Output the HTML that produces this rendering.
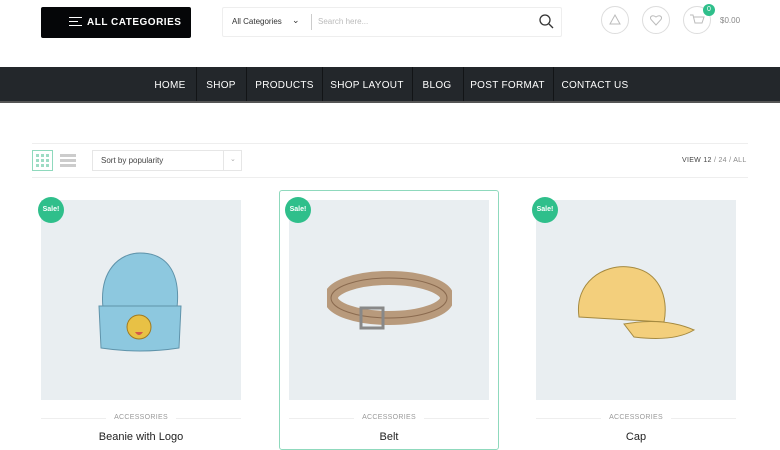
<!DOCTYPE html>
<html><head><meta charset="utf-8"><style>
*{margin:0;padding:0;box-sizing:border-box}
body{width:780px;height:440px;overflow:hidden;background:#fff;font-family:"Liberation Sans",sans-serif;position:relative}
.a{position:absolute}
.nav{left:0;top:67px;width:780px;height:36px;background:#23272b;border-bottom:2px solid #555}
.nav span{position:absolute;top:2px;height:34px;line-height:34px;color:#fff;font-size:10px;letter-spacing:.3px;text-align:center}
.sep{position:absolute;top:0;width:1px;height:34px;background:#121416}
.img{background:#e9eef1;width:200px;height:200px}
.sale{width:26px;height:26px;border-radius:50%;background:#2fbf8b;color:#fff;font-size:7px;font-weight:bold;text-align:center;line-height:26px}
.cat{font-size:7px;color:#999;text-align:center;width:200px;letter-spacing:.3px}
.ttl{font-size:11px;color:#222;text-align:center;width:200px}
.ln{height:1px;background:#eee}
.ic{width:28px;height:28px;border:1px solid #ddd;border-radius:50%}
</style></head><body>
<div class="a" style="left:41px;top:7px;width:150px;height:31px;background:#050608;border-radius:2px;color:#fff;font-size:10px;font-weight:bold;letter-spacing:.5px;line-height:31px;padding-left:46px">ALL CATEGORIES</div>
<div class="a" style="left:69px;top:17px;width:13px;height:1px;background:#fff"></div>
<div class="a" style="left:69px;top:21px;width:9px;height:1px;background:#fff"></div>
<div class="a" style="left:69px;top:25px;width:13px;height:1px;background:#fff"></div>
<div class="a" style="left:222px;top:7px;width:340px;height:30px;border:1px solid #eee;border-radius:2px"></div>
<div class="a" style="left:232px;top:17px;font-size:8px;color:#333">All Categories</div>
<div class="a" style="left:292px;top:15px;font-size:9px;color:#333">&#8964;</div>
<div class="a" style="left:311px;top:14px;width:1px;height:16px;background:#ccc"></div>
<div class="a" style="left:318px;top:17px;font-size:8px;color:#bbb">Search here...</div>
<svg class="a" style="left:538px;top:13px" width="16" height="16"><circle cx="7" cy="7" r="5" fill="none" stroke="#333" stroke-width="1.3"/><path d="M11 11l4 4" stroke="#333" stroke-width="1.3"/></svg>
<div class="a ic" style="left:601px;top:6px"></div>
<svg class="a" style="left:608px;top:13px" width="14" height="14"><path d="M7 2L12 11H2Z" fill="none" stroke="#bbb"/></svg>
<div class="a ic" style="left:642px;top:6px"></div>
<svg class="a" style="left:649px;top:13px" width="14" height="14"><path d="M7 12L2 6.5C0.5 4 3 1 7 4 11 1 13.5 4 12 6.5Z" fill="none" stroke="#bbb"/></svg>
<div class="a ic" style="left:683px;top:6px"></div>
<svg class="a" style="left:689px;top:13px" width="16" height="14"><path d="M1 2h3l2 8h7l2-6H5" fill="none" stroke="#bbb"/></svg>
<div class="a" style="left:703px;top:4px;width:12px;height:12px;border-radius:50%;background:#2fbf8b;color:#fff;font-size:7px;text-align:center;line-height:12px">0</div>
<div class="a" style="left:720px;top:16px;font-size:8px;color:#888">$0.00</div>
<div class="a nav">
<span style="left:146px;width:48px">HOME</span><div class="sep" style="left:196px"></div>
<span style="left:197px;width:48px">SHOP</span><div class="sep" style="left:246px"></div>
<span style="left:247px;width:75px">PRODUCTS</span><div class="sep" style="left:322px"></div>
<span style="left:323px;width:88px">SHOP LAYOUT</span><div class="sep" style="left:412px"></div>
<span style="left:413px;width:48px">BLOG</span><div class="sep" style="left:463px"></div>
<span style="left:464px;width:87px">POST FORMAT</span><div class="sep" style="left:553px"></div>
<span style="left:554px;width:82px">CONTACT US</span>
</div>
<div class="a ln" style="left:32px;top:143px;width:716px"></div>
<div class="a" style="left:32px;top:150px;width:21px;height:21px;border:1px solid #8fd9bd"></div>
<svg class="a" style="left:36px;top:154px" width="13" height="13" fill="#9ddcc4"><rect x="0" y="0" width="3" height="3"/><rect x="5" y="0" width="3" height="3"/><rect x="10" y="0" width="3" height="3"/><rect x="0" y="5" width="3" height="3"/><rect x="5" y="5" width="3" height="3"/><rect x="10" y="5" width="3" height="3"/><rect x="0" y="10" width="3" height="3"/><rect x="5" y="10" width="3" height="3"/><rect x="10" y="10" width="3" height="3"/></svg>
<svg class="a" style="left:60px;top:153px" width="16" height="16" fill="#ccc"><rect x="0" y="1" width="16" height="3"/><rect x="0" y="6" width="16" height="3"/><rect x="0" y="11" width="16" height="3"/></svg>
<div class="a" style="left:92px;top:150px;width:150px;height:21px;border:1px solid #e6e6e6"></div>
<div class="a" style="left:223px;top:150px;width:1px;height:21px;background:#e6e6e6"></div>
<div class="a" style="left:101px;top:156px;font-size:8px;color:#444">Sort by popularity</div>
<div class="a" style="left:230px;top:155px;font-size:7px;color:#aaa">&#8964;</div>
<div class="a" style="left:682px;top:157px;font-size:7px;color:#888;letter-spacing:.3px"><span style="color:#444">VIEW 12</span> / 24 / ALL</div>
<div class="a ln" style="left:32px;top:177px;width:716px"></div>
<div class="a" style="left:279px;top:190px;width:220px;height:260px;border:1px solid #8fd9bd;border-radius:3px"></div>

<div class="a img" style="left:41px;top:200px"></div>
<div class="a img" style="left:289px;top:200px"></div>
<div class="a img" style="left:536px;top:200px"></div>
<div class="a sale" style="left:38px;top:197px">Sale!</div>
<div class="a sale" style="left:285px;top:197px">Sale!</div>
<div class="a sale" style="left:532px;top:197px">Sale!</div>

<svg class="a" style="left:95px;top:250px" width="90" height="105">
<path d="M8 58C4 20 25 3 45 3 70 3 86 20 82 58Z" fill="#8dc8df" stroke="#5f93aa"/>
<path d="M4 56H86L84 98Q45 104 6 98Z" fill="#8dc8df" stroke="#5f93aa"/>
<circle cx="44" cy="77" r="12" fill="#e8c145" stroke="#a07a20"/>
<path d="M40 82q4 6 8 0" fill="#d45a4a"/>
</svg>
<svg class="a" style="left:327px;top:268px" width="125" height="70">
<ellipse cx="62" cy="30" rx="58" ry="20" fill="none" stroke="#b89a7c" stroke-width="14"/>
<ellipse cx="62" cy="30" rx="58" ry="20" fill="none" stroke="#8a6a4f" stroke-width="1"/>
<rect x="34" y="40" width="22" height="20" fill="none" stroke="#888" stroke-width="3"/>
</svg>
<svg class="a" style="left:574px;top:262px" width="125" height="85">
<path d="M5 55C0 20 30 2 55 5 85 8 95 35 90 60Z" fill="#f3cf7c" stroke="#a58a40"/>
<path d="M50 62Q90 55 120 68 100 80 60 75Z" fill="#f3cf7c" stroke="#a58a40"/>
</svg>

<div class="a ln" style="left:41px;top:418px;width:200px"></div>
<div class="a ln" style="left:289px;top:418px;width:200px"></div>
<div class="a ln" style="left:536px;top:418px;width:200px"></div>
<div class="a cat" style="left:41px;top:414px"><span style="background:#fff;padding:0 8px">ACCESSORIES</span></div>
<div class="a cat" style="left:289px;top:414px"><span style="background:#fff;padding:0 8px">ACCESSORIES</span></div>
<div class="a cat" style="left:536px;top:414px"><span style="background:#fff;padding:0 8px">ACCESSORIES</span></div>
<div class="a ttl" style="left:41px;top:431px">Beanie with Logo</div>
<div class="a ttl" style="left:289px;top:431px">Belt</div>
<div class="a ttl" style="left:536px;top:431px">Cap</div>
</body></html>
